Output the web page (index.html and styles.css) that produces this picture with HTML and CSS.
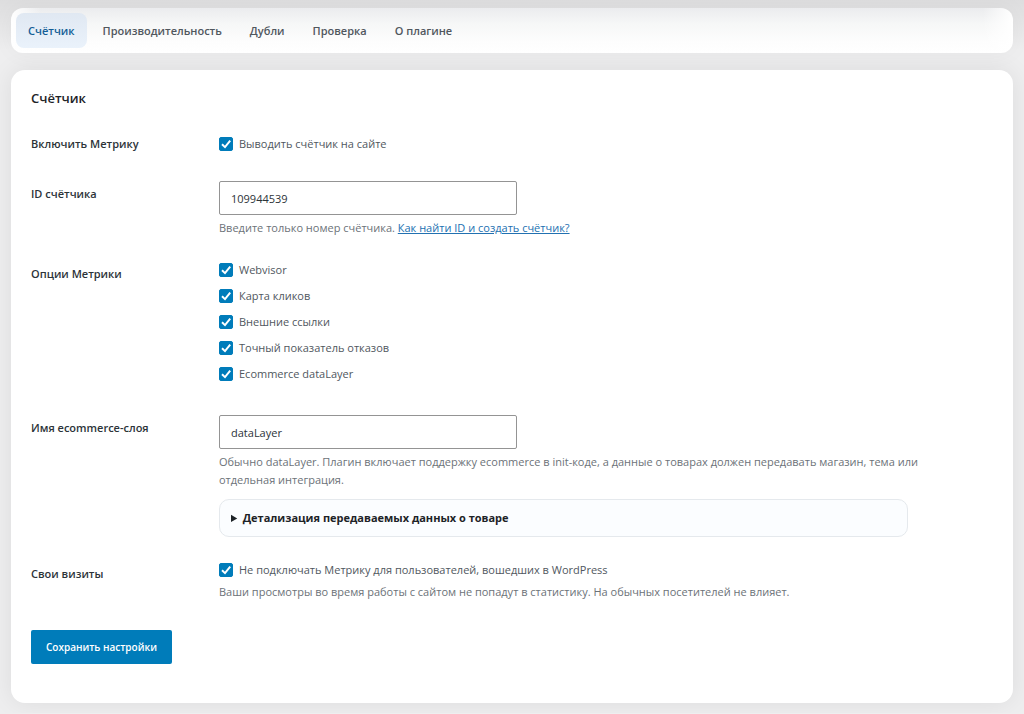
FILE: index.html
```html
<!DOCTYPE html>
<html lang="ru">
<head>
  <meta charset="UTF-8">
  <meta name="viewport" content="width=device-width, initial-scale=1">
  <title>Счётчик</title>
  <link rel="stylesheet" href="styles.css">
</head>
<body>
  <nav class="tabs">
    <a class="tab active" href="#counter">Счётчик</a>
    <a class="tab" href="#performance">Производительность</a>
    <a class="tab" href="#duplicates">Дубли</a>
    <a class="tab" href="#check">Проверка</a>
    <a class="tab" href="#about">О плагине</a>
  </nav>

  <main class="card" id="counter">
    <h2>Счётчик</h2>

    <form>
      <div class="row">
        <div class="row-title">Включить Метрику</div>
        <div class="field field-single">
          <label class="check"><input type="checkbox" checked> Выводить счётчик на сайте</label>
        </div>
      </div>

      <div class="row">
        <label class="row-title" for="counterId">ID счётчика</label>
        <div class="field">
          <input class="text-input" type="text" id="counterId" value="109944539">
          <p class="description">Введите только номер счётчика. <a href="#help">Как найти ID и создать счётчик?</a></p>
        </div>
      </div>

      <div class="row">
        <div class="row-title">Опции Метрики</div>
        <div class="field options">
          <label class="check"><input type="checkbox" checked> Webvisor</label>
          <label class="check"><input type="checkbox" checked> Карта кликов</label>
          <label class="check"><input type="checkbox" checked> Внешние ссылки</label>
          <label class="check"><input type="checkbox" checked> Точный показатель отказов</label>
          <label class="check"><input type="checkbox" checked> Ecommerce dataLayer</label>
        </div>
      </div>

      <div class="row">
        <label class="row-title" for="layerName">Имя ecommerce-слоя</label>
        <div class="field">
          <input class="text-input" type="text" id="layerName" value="dataLayer">
          <p class="description">Обычно dataLayer. Плагин включает поддержку ecommerce в init-коде, а данные о товарах должен передавать магазин, тема или отдельная интеграция.</p>
          <details class="details">
            <summary>Детализация передаваемых данных о товаре</summary>
          </details>
        </div>
      </div>

      <div class="row">
        <div class="row-title">Свои визиты</div>
        <div class="field">
          <label class="check"><input type="checkbox" checked> Не подключать Метрику для пользователей, вошедших в WordPress</label>
          <p class="description">Ваши просмотры во время работы с сайтом не попадут в статистику. На обычных посетителей не влияет.</p>
        </div>
      </div>

      <button class="save" type="submit">Сохранить настройки</button>
    </form>
  </main>
</body>
</html>
```

FILE: styles.css
```css
* { box-sizing: border-box; }

html { background: #eeeeef; }
body {
  margin: 0;
  padding: 8px 11px 10px;
  font-family: "Segoe UI", "Open Sans", "Noto Sans", sans-serif;
  font-size: 11px;
  line-height: 18px;
  color: #50575e;
  background: linear-gradient(rgba(0, 0, 0, 0.07), transparent 50px);
}

.tabs {
  position: relative;
  z-index: 1;
  display: flex;
  gap: 4px;
  padding: 5px;
  margin-bottom: 17px;
  border-radius: 12px;
  background:
    linear-gradient(to right, #fff, transparent 30px),
    linear-gradient(to left, #fff, transparent 30px),
    linear-gradient(#ebecee, #f6f7f7 35%, #fdfdfd 75%, #fff);
  box-shadow: 0 0 24px rgba(0, 0, 0, 0.04);
}
.tab {
  padding: 9px 12px 8px;
  border-radius: 8px;
  font-weight: 600;
  color: #50575e;
  text-decoration: none;
}
.tab.active {
  color: #135e96;
  background: linear-gradient(#e0e8f2, #eaf2fb);
}

.card {
  padding: 18px 20px 39px;
  border-radius: 14px;
  background: #fff;
  box-shadow: 0 0 24px rgba(0, 0, 0, 0.08);
}
h2 {
  margin: 0 0 23px;
  font-size: 13px;
  font-weight: 600;
  line-height: 20px;
  color: #1d2327;
}

.row {
  display: grid;
  grid-template-columns: 188px 1fr;
  margin-bottom: 24px;
}
.row-title {
  padding-top: 4px;
  font-weight: 600;
  color: #2c3338;
}
.field { max-width: 720px; }
.field-single { padding: 4px 0; }

.check {
  display: flex;
  align-items: center;
  gap: 6px;
}
.options .check { margin-bottom: 8px; }
.check input {
  appearance: none;
  width: 14px;
  height: 14px;
  margin: 0;
  border: 1px solid #8c8f94;
  border-radius: 2px;
}
.check input:checked {
  border-color: #007cba;
  background: #007cba url("data:image/svg+xml,%3Csvg xmlns='http://www.w3.org/2000/svg' viewBox='0 0 12 12'%3E%3Cpath d='M2 6.2l3 2.9 5.2-6.4' fill='none' stroke='%23fff' stroke-width='2'/%3E%3C/svg%3E") center / 12px no-repeat;
}

.text-input {
  display: block;
  width: 298px;
  max-width: 100%;
  height: 34px;
  padding: 0 11px;
  border: 1px solid #949494;
  border-radius: 2px;
  font: inherit;
  color: #2c3338;
  background: #fff;
}
.description {
  margin: 4px 0 0;
  color: #6c7278;
}
.description a { color: #2271b1; }

.details {
  max-width: 689px;
  margin-top: 10px;
  padding: 9px 11px;
  border: 1px solid #e5e9ed;
  border-radius: 10px;
  background: #fbfdff;
}
.details summary {
  font-weight: 700;
  color: #1d2327;
}

.save {
  height: 34px;
  margin-top: 5px;
  padding: 0 15px;
  border: 0;
  border-radius: 2px;
  font: inherit;
  font-size: 10px;
  font-weight: 600;
  color: #fff;
  background: #007cba;
}
```
